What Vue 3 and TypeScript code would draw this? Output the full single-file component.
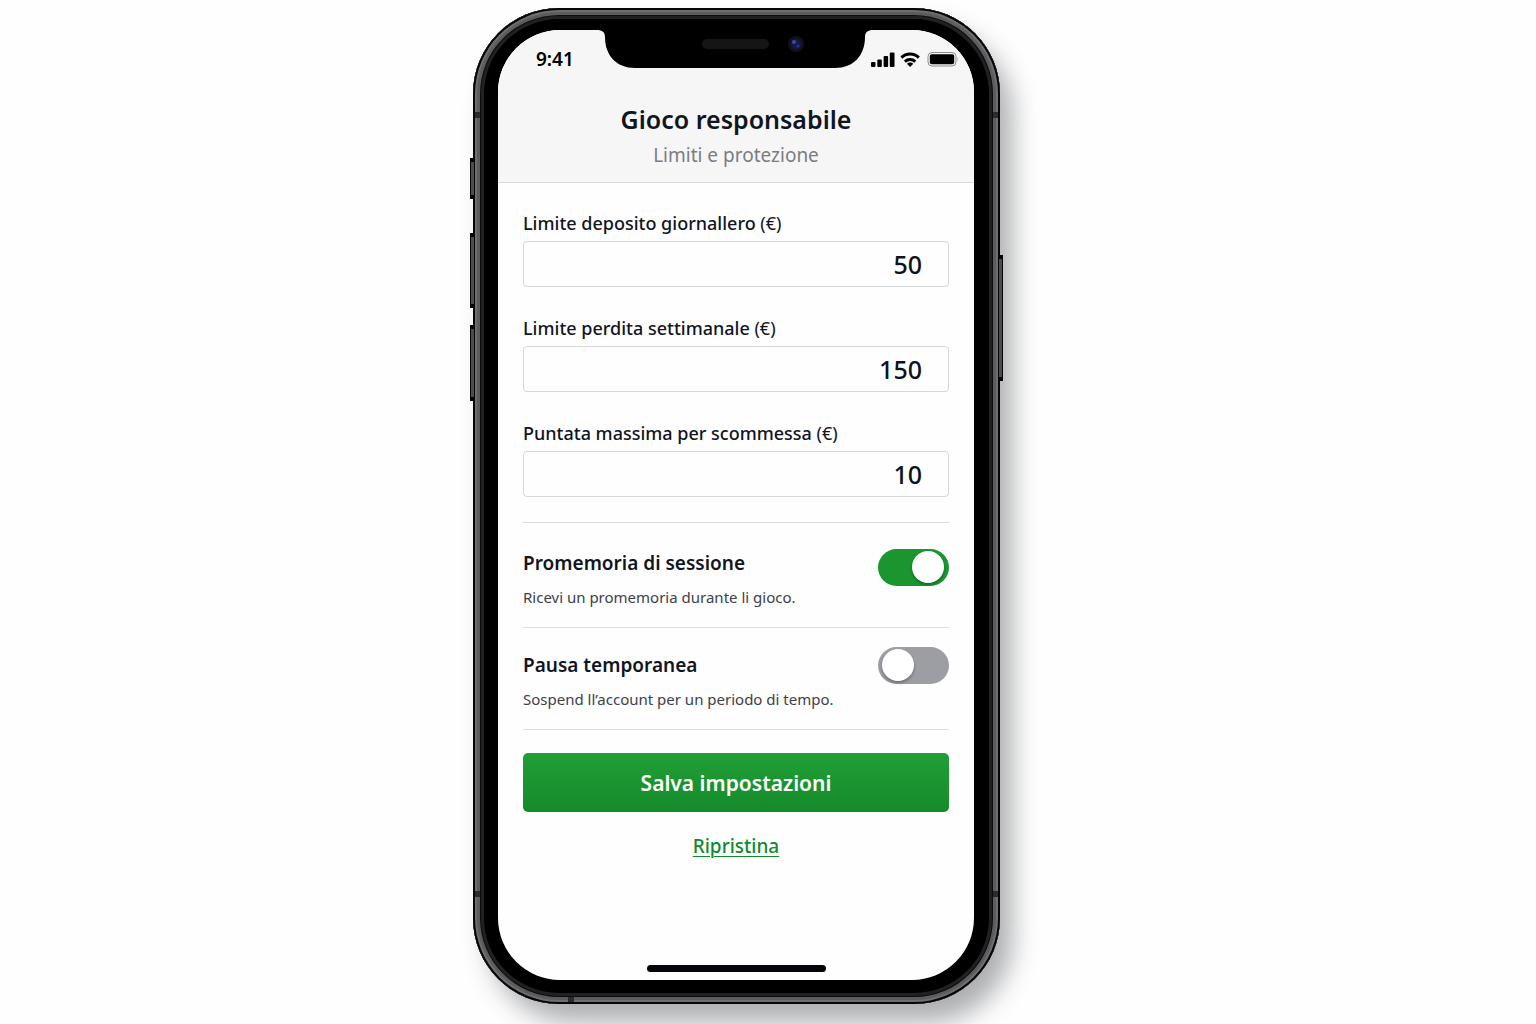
<script setup lang="ts">
import { reactive, ref } from 'vue'

interface LimitField {
  id: string
  label: string
  value: string
}

interface ToggleOption {
  id: string
  title: string
  description: string
  enabled: boolean
}

const defaultLimits = ['50', '150', '10']

const limits = reactive<LimitField[]>([
  { id: 'daily-deposit', label: 'Limite deposito giornallero', value: '50' },
  { id: 'weekly-loss', label: 'Limite perdita settimanale', value: '150' },
  { id: 'max-stake', label: 'Puntata massima per scommessa', value: '10' },
])

const options = reactive<ToggleOption[]>([
  {
    id: 'session-reminder',
    title: 'Promemoria di sessione',
    description: 'Ricevi un promemoria durante li gioco.',
    enabled: true,
  },
  {
    id: 'temporary-break',
    title: 'Pausa temporanea',
    description: 'Sospend ll’account per un periodo di tempo.',
    enabled: false,
  },
])

const saved = ref(false)

function save(): void {
  saved.value = true
}

function reset(): void {
  limits.forEach((field, index) => (field.value = defaultLimits[index]))
  options.forEach((option, index) => (option.enabled = index === 0))
  saved.value = false
}
</script>

<template>
  <div class="stage">
    <div class="phone">
      <span class="key key-mute"></span>
      <span class="key key-up"></span>
      <span class="key key-down"></span>
      <span class="key key-power"></span>
      <span class="band band-tl"></span>
      <span class="band band-tr"></span>
      <span class="band band-bl"></span>
      <span class="band band-br"></span>
      <span class="band band-bottom"></span>

      <main class="screen">
        <svg class="notch" width="276" height="40" viewBox="0 0 276 40" aria-hidden="true">
          <path d="M0 0H276V1C271 1 268 3 268 8C268 27 256 39 238 39H38C20 39 8 27 8 8C8 3 5 1 0 1Z" fill="#000" />
          <rect x="105" y="10" width="67" height="10" rx="5" fill="#151516" />
          <circle cx="199" cy="15" r="8" fill="#111217" />
          <circle cx="199" cy="15" r="5" fill="#15184a" />
          <circle cx="197" cy="13" r="2" fill="#3a49b8" />
          <circle cx="201" cy="17" r="1.5" fill="#2a2f9a" />
        </svg>

        <header class="header">
          <div class="status">
            <span class="time">9:41</span>
            <svg class="indicators" width="88" height="18" viewBox="0 0 88 18" aria-hidden="true">
              <rect x="0" y="12" width="4.500" height="5" rx="1" />
              <rect x="6.300" y="9.500" width="4.500" height="7.500" rx="1" />
              <rect x="12.600" y="6" width="4.500" height="11" rx="1" />
              <rect x="18.800" y="2.500" width="4.700" height="14.500" rx="1" />
              <g fill="none" stroke="#000" stroke-width="3">
                <path d="M30.400 7.600a12.400 12.400 0 0 1 17.400 0" />
                <path d="M33.900 11.600a7.800 7.800 0 0 1 10.400 0" />
              </g>
              <path d="M35.900 13.800a4.600 4.600 0 0 1 6.400 0L39.100 17Z" />
              <rect x="57" y="2.500" width="28" height="13.500" rx="4" fill="none" stroke="#8d8d90" />
              <rect x="58.800" y="4.200" width="24.400" height="10.100" rx="2" />
              <path d="M86.500 7q1.500 2.200 0 4.500Z" fill="#8d8d90" />
            </svg>
          </div>
          <h1>Gioco responsabile</h1>
          <p class="subtitle">Limiti e protezione</p>
        </header>

        <form class="content" @submit.prevent="save">
          <div class="fields">
            <div v-for="field in limits" :key="field.id" class="field">
              <label :for="field.id">{{ field.label }} <span class="unit">(€)</span></label>
              <input :id="field.id" v-model="field.value" type="text" inputmode="numeric" />
            </div>
          </div>

          <div class="options">
            <div v-for="option in options" :key="option.id" class="option">
              <div class="option-text">
                <label :for="option.id">{{ option.title }}</label>
                <p>{{ option.description }}</p>
              </div>
              <input :id="option.id" v-model="option.enabled" class="switch" type="checkbox" role="switch" />
            </div>
          </div>

          <button class="save" type="submit">Salva impostazioni</button>
          <a class="reset" href="#" @click.prevent="reset">Ripristina</a>
        </form>

        <div class="home-indicator"></div>
      </main>
    </div>
  </div>
</template>

<style>
body {
  margin: 0;
  background: #fefefe;
}
</style>

<style scoped>
* {
  box-sizing: border-box;
}

.stage {
  display: flex;
  justify-content: center;
  padding: 8px 63px 20px 0;
  overflow: hidden;
  font-family: 'Noto Sans', 'Open Sans', sans-serif;
  color: #10151f;
}

.phone {
  position: relative;
  width: 100%;
  max-width: 527px;
  padding: 22px 26px 24px 25px;
  border-radius: 86px;
  background: #000;
  box-shadow:
    inset 0 0 0 2px #060607,
    inset 0 0 0 4px #6e6e70,
    inset 0 0 0 7px #5c5c5e,
    inset 0 0 0 8px #0c0c0d,
    inset 0 0 0 11px #212123,
    14px 20px 26px -2px rgba(36, 42, 50, 0.38);
}

.key {
  position: absolute;
  width: 5px;
  border: 1px solid #050505;
  border-top-width: 4px;
  border-bottom-width: 4px;
  background: #4c4c4e;
}

.key-mute {
  left: -3px;
  top: 150px;
  height: 41px;
}

.key-up {
  left: -3px;
  top: 225px;
  height: 75px;
}

.key-down {
  left: -3px;
  top: 317px;
  height: 76px;
}

.key-power {
  right: -3px;
  top: 247px;
  height: 126px;
}

.band {
  position: absolute;
  width: 5px;
  height: 6px;
  background: #2b2b2d;
}

.band-tl {
  left: 2px;
  top: 104px;
}

.band-tr {
  right: 2px;
  top: 104px;
}

.band-bl {
  left: 2px;
  bottom: 107px;
}

.band-br {
  right: 2px;
  bottom: 107px;
}

.band-bottom {
  left: 95px;
  bottom: 2px;
  width: 6px;
  height: 5px;
}

.screen {
  position: relative;
  display: flex;
  flex-direction: column;
  min-height: 950px;
  border-radius: 62px;
  overflow: hidden;
  background: #fefefe;
}

.notch {
  position: absolute;
  top: -1px;
  left: 50%;
  margin-left: -139px;
}

.header {
  padding-bottom: 13px;
  border-bottom: 1px solid #d9dadc;
  background: #f6f6f7;
  text-align: center;
}

.status {
  display: flex;
  justify-content: space-between;
  align-items: center;
  height: 58px;
  padding: 0 15px 0 38px;
}

.time {
  font-size: 19px;
  font-weight: 600;
  color: #000;
}

h1 {
  margin: 12px 0 0;
  font-size: 25px;
  line-height: 38px;
  font-weight: 600;
}

.subtitle {
  margin: 3px 0 0;
  font-size: 19px;
  line-height: 28px;
  color: #7b7d82;
}

.content {
  display: flex;
  flex-direction: column;
  padding: 26px 25px 0;
}

.fields {
  display: flex;
  flex-direction: column;
  gap: 27px;
  margin-bottom: 25px;
}

.field {
  display: flex;
  flex-direction: column;
}

.field label {
  font-size: 18px;
  line-height: 28px;
  font-weight: 500;
  margin-bottom: 4px;
}

.unit {
  font-weight: 400;
}

.field input {
  width: 100%;
  height: 46px;
  padding: 0 26px;
  border: 1px solid #d5d6d9;
  border-radius: 4px;
  background: #fefefe;
  color: #0d121c;
  font: 500 25px 'Noto Sans', 'Open Sans', sans-serif;
  text-align: right;
}

.options {
  border-top: 1px solid #dcdde0;
  margin-bottom: 23px;
}

.option {
  display: flex;
  justify-content: space-between;
  align-items: flex-start;
  padding: 26px 0 18px;
  border-bottom: 1px solid #dcdde0;
}

.option + .option {
  padding-top: 19px;
}

.option + .option .option-text {
  padding-top: 4px;
}

.option label {
  display: block;
  font-size: 19px;
  line-height: 28px;
  font-weight: 600;
}

.option p {
  margin: 8px 0 0;
  font-size: 15px;
  line-height: 24px;
  color: #3d4149;
}

.switch {
  position: relative;
  flex: none;
  appearance: none;
  width: 71px;
  height: 37px;
  margin: 0;
  border-radius: 19px;
  background: #9c9ea4;
}

.switch::before {
  content: '';
  position: absolute;
  top: 2px;
  left: 4px;
  width: 32px;
  height: 32px;
  border-radius: 50%;
  background: #fff;
  box-shadow: 0 2px 3px rgba(0, 0, 0, 0.3);
}

.switch:checked {
  background: #1b9530;
}

.switch:checked::before {
  left: 34px;
}

.save {
  height: 59px;
  border: 0;
  border-radius: 5px;
  background: linear-gradient(#219f37, #158a2a);
  color: #fff;
  font: 600 21px 'Noto Sans', 'Open Sans', sans-serif;
}

.reset {
  align-self: center;
  margin-top: 20px;
  font-size: 19px;
  line-height: 28px;
  font-weight: 500;
  color: #0f8a2c;
  text-underline-offset: 3px;
  text-decoration-thickness: 1px;
}

.home-indicator {
  width: 179px;
  height: 7px;
  margin: auto auto 8px;
  border-radius: 4px;
  background: #040508;
}
</style>
